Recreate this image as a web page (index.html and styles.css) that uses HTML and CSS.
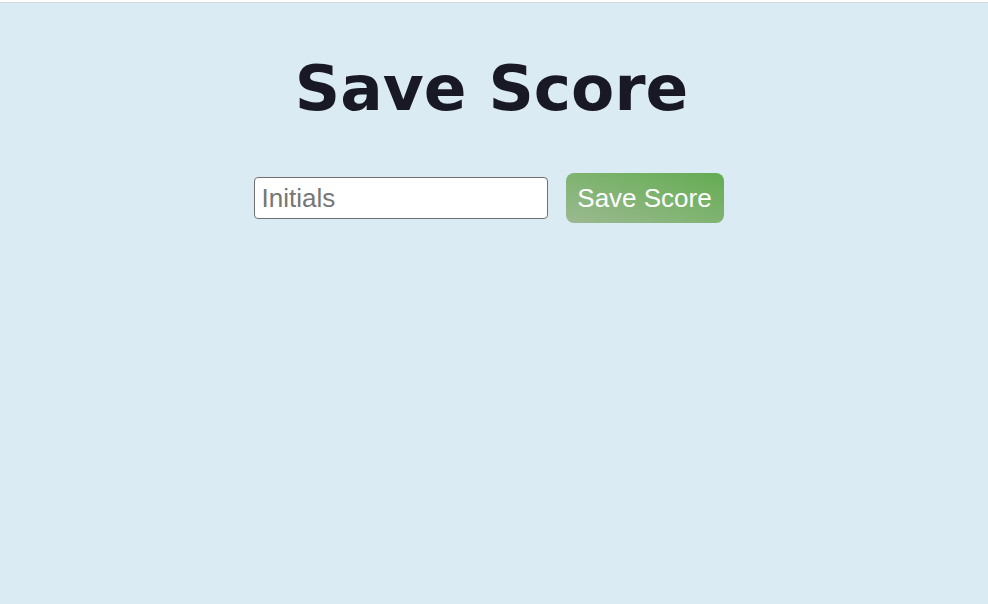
FILE: index.html
```html
<!DOCTYPE html>
<html lang="en">
<head>
<meta charset="utf-8">
<title>Save Score</title>
<link rel="stylesheet" href="styles.css">
</head>
<body>
<div class="frame">
  <main class="page">
    <h1 class="title">Save Score</h1>
    <form class="score-form">
      <input class="initials" type="text" placeholder="Initials">
      <button class="save-btn" type="button">Save Score</button>
    </form>
  </main>
</div>
</body>
</html>
```

FILE: styles.css
```css
html, body {
  margin: 0;
  padding: 0;
  height: 100%;
  background: #ffffff;
}

body {
  padding-top: 2px;
  box-sizing: border-box;
}

.frame {
  height: 100%;
  box-sizing: border-box;
  border-top: 1px solid #d9d9d9;
  background: #dbebf4;
}

.page {
  display: flex;
  flex-direction: column;
  align-items: center;
  padding-right: 11px;
}

.title {
  margin: 42px 0 0 6px;
  font-family: "DejaVu Sans", Verdana, sans-serif;
  font-weight: bold;
  font-size: 63px;
  line-height: 88px;
  color: #191825;
}

.score-form {
  display: flex;
  align-items: center;
  gap: 18px;
  margin-top: 40px;
}

.initials {
  box-sizing: border-box;
  width: 294px;
  height: 42px;
  margin: 0;
  padding: 0 7px;
  border: 1px solid #707070;
  border-radius: 4px;
  background: #ffffff;
  font-family: "Liberation Sans", Arial, sans-serif;
  font-size: 26px;
  color: #222;
}

.initials::placeholder {
  color: #767676;
}

.save-btn {
  box-sizing: border-box;
  height: 50px;
  width: 158px;
  margin: 0;
  padding: 0;
  border: none;
  border-radius: 8px;
  background: linear-gradient(to top right, #9cb991 0%, #82b474 45%, #64ac52 100%);
  color: #ffffff;
  font-family: "Liberation Sans", Arial, sans-serif;
  font-size: 26px;
  cursor: pointer;
}
```
